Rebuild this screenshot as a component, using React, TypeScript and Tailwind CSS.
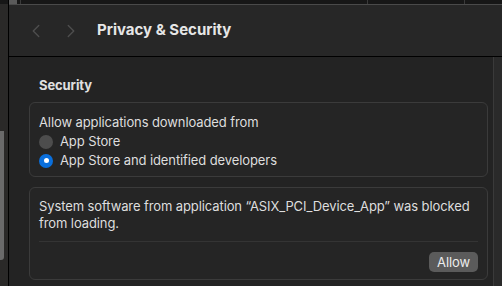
import { ChevronLeft, ChevronRight } from "lucide-react"

const FONT = "Inter, 'Noto Sans', 'Liberation Sans', sans-serif"

function Radio({ checked, label }: { checked?: boolean; label: string }) {
  return (
    <div className="flex items-center gap-[7px] h-[19px]">
      {checked ? (
        <span className="w-[14px] h-[14px] rounded-full bg-[#0a6fdc] flex items-center justify-center">
          <span className="w-[5px] h-[5px] rounded-full bg-white" />
        </span>
      ) : (
        <span className="w-[14px] h-[14px] rounded-full bg-[#4d4d4d]" />
      )}
      <span>{label}</span>
    </div>
  )
}

export default function App() {
  return (
    <div className="w-[502px] h-[286px] flex overflow-hidden bg-[#232323] text-[13px] text-[#dedede] tracking-[-0.1px]" style={{ fontFamily: FONT }}>
      {/* sidebar edge */}
      <div className="w-[8px] flex flex-col bg-[#2a2928]">
        <div className="h-[4px] bg-[#171717]" />
        <div className="h-[127px]" />
        <div className="h-[129px] w-[4px] bg-[#6a6a6a] rounded-br-[3px]" />
      </div>
      <div className="w-[1px] bg-black" />

      <div className="flex-1 flex flex-col min-w-0">
        {/* top strip */}
        <div className="h-[4px] bg-[#171717] flex">
          <div className="w-[8px] bg-[#5a5a5a]" />
          <div className="w-[3px]" />
          <div className="w-[1px] bg-[#3a3a3a]" />
          <div className="w-[346px]" />
          <div className="w-[1px] bg-[#3a3a3a]" />
          <div className="w-[96px]" />
          <div className="w-[1px] bg-[#3a3a3a]" />
        </div>
        <div className="h-[1px] bg-[#4a4a4a]" />

        {/* title bar */}
        <div className="h-[52px] bg-[#272727] border-b border-black flex items-center">
          <ChevronLeft size={22} strokeWidth={1.5} className="ml-[16px] text-[#4e4e4e]" />
          <ChevronRight size={22} strokeWidth={1.5} className="ml-[13px] text-[#4e4e4e]" />
          <span className="ml-[15px] text-[15px] font-bold text-[#e6e6e6] tracking-normal">Privacy &amp; Security</span>
        </div>

        {/* content */}
        <div className="flex-1 flex">
          <div className="flex-1 flex flex-col pl-[20px] pr-[5px]">
            <div className="pl-[10px] pt-[19px] h-[45px] font-bold text-[13px] text-[#e0e0e0]">Security</div>

            <div className="border border-[#3b3b3b] rounded-[6px] bg-[#252525] px-[9px] pt-[10px] h-[75px]">
              <div className="h-[19px] leading-[19px]">Allow applications downloaded from</div>
              <Radio label="App Store" />
              <Radio checked label="App Store and identified developers" />
            </div>

            <div className="mt-[10px] border border-[#3b3b3b] rounded-[6px] bg-[#252525] px-[9px] pt-[10px] h-[93px] flex flex-col">
              <div className="leading-[17px]">
                System software from application “ASIX_PCI_Device_App” was blocked from loading.
              </div>
              <div className="mt-[9px] h-[1px] bg-[#343434]" />
              <div className="flex justify-end pt-[10px]">
                <button className="h-[20px] px-[8px] rounded-[5px] bg-[#5b5b5b] text-[#ececec] text-[13px] leading-[20px]">Allow</button>
              </div>
            </div>
          </div>
          <div className="w-[9px] border-l border-[#3a3a3a] bg-[#2a2a2a]" />
        </div>
      </div>
    </div>
  )
}
